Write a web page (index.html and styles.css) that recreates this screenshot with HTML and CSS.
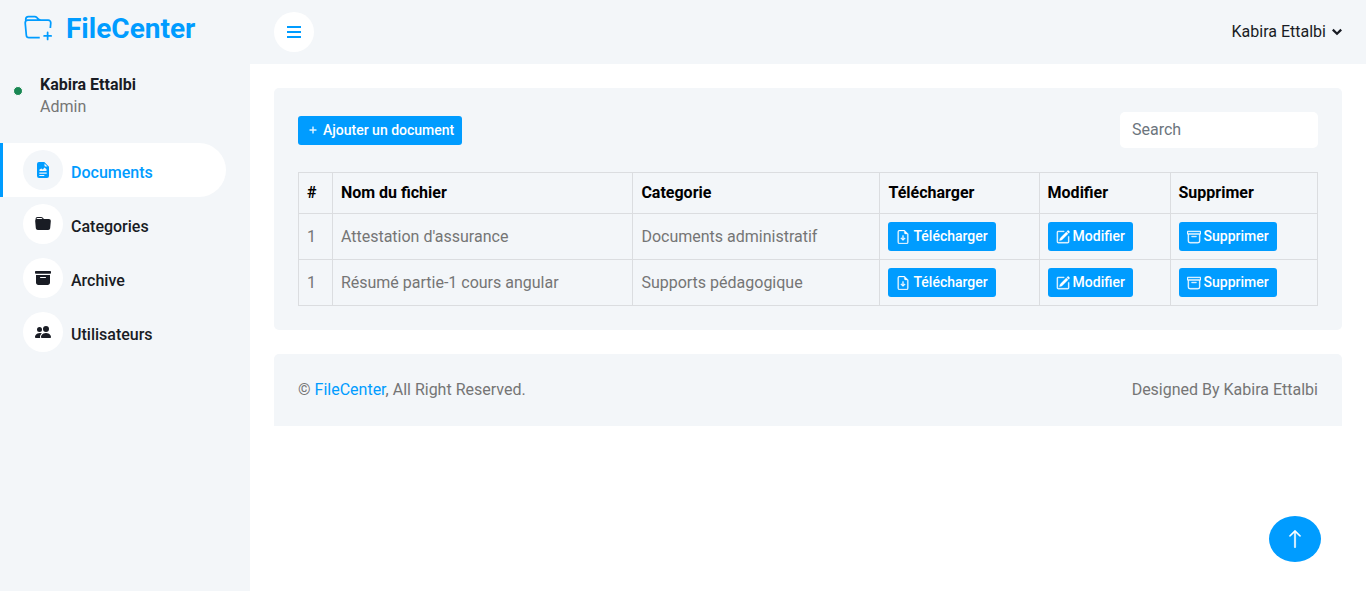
FILE: index.html
```html
<!DOCTYPE html>
<html lang="fr">
<head>
<meta charset="utf-8">
<meta name="viewport" content="width=device-width, initial-scale=1">
<title>FileCenter</title>
<link rel="stylesheet" href="styles.css">
</head>
<body>
<svg class="sprite" aria-hidden="true">
  <symbol id="i-plus" viewBox="0 0 16 16"><path d="M8 4a.5.5 0 0 1 .5.5v3h3a.5.5 0 0 1 0 1h-3v3a.5.5 0 0 1-1 0v-3h-3a.5.5 0 0 1 0-1h3v-3A.5.5 0 0 1 8 4z"/></symbol>
  <symbol id="i-download" viewBox="0 0 16 16"><path d="M8.5 6.5a.5.5 0 0 0-1 0v3.793L6.354 9.146a.5.5 0 1 0-.708.708l2 2a.5.5 0 0 0 .708 0l2-2a.5.5 0 0 0-.708-.708L8.5 10.293V6.5z"/><path d="M14 14V4.5L9.500 0H4a2 2 0 0 0-2 2v12a2 2 0 0 0 2 2h8a2 2 0 0 0 2-2zM9.500 3A1.500 1.500 0 0 0 11 4.500h2V14a1 1 0 0 1-1 1H4a1 1 0 0 1-1-1V2a1 1 0 0 1 1-1h5.500v2z"/></symbol>
  <symbol id="i-edit" viewBox="0 0 16 16"><path d="M15.502 1.940a.5.5 0 0 1 0 .706L14.459 3.690l-2-2L13.502.646a.5.5 0 0 1 .707 0l1.293 1.293zm-1.750 2.456-2-2L4.939 9.210a.5.5 0 0 0-.121.196l-.805 2.414a.25.25 0 0 0 .316.316l2.414-.805a.5.5 0 0 0 .196-.120l6.813-6.814z"/><path fill-rule="evenodd" d="M1 13.500A1.500 1.500 0 0 0 2.500 15h11a1.500 1.500 0 0 0 1.500-1.500v-6a.5.5 0 0 0-1 0v6a.5.5 0 0 1-.5.5h-11a.5.5 0 0 1-.5-.5v-11a.5.5 0 0 1 .5-.5H9a.5.5 0 0 0 0-1H2.500A1.500 1.500 0 0 0 1 2.500v11z"/></symbol>
  <symbol id="i-archive" viewBox="0 0 16 16"><path d="M0 2a1 1 0 0 1 1-1h14a1 1 0 0 1 1 1v2a1 1 0 0 1-1 1v7.500a2.500 2.500 0 0 1-2.500 2.500h-9A2.500 2.500 0 0 1 1 12.500V5a1 1 0 0 1-1-1V2zm2 3v7.500A1.500 1.500 0 0 0 3.500 14h9a1.500 1.500 0 0 0 1.500-1.500V5H2zm13-3H1v2h14V2zM5 7.500a.5.5 0 0 1 .5-.5h5a.5.5 0 0 1 0 1h-5a.5.5 0 0 1-.5-.5z"/></symbol>
</svg>
<div class="layout">
  <aside class="sidebar">
    <a class="brand" href="#">
      <svg class="brand-icon" viewBox="0 0 16 16" fill="currentColor" aria-hidden="true"><path d="m.5 3 .04.870a1.990 1.990 0 0 0-.342 1.311l.637 7A2 2 0 0 0 2.826 14H9v-1H2.826a1 1 0 0 1-.995-.910l-.637-7A1 1 0 0 1 2.190 4h11.620a1 1 0 0 1 .996 1.090L14.540 8h1.005l.256-2.819A2 2 0 0 0 13.810 3H9.828a2 2 0 0 1-1.414-.586l-.828-.828A2 2 0 0 0 6.172 1H2.500a2 2 0 0 0-2 2zm5.672-1a1 1 0 0 1 .707.293L7.586 3H2.190c-.240 0-.470.042-.683.120L1.500 2.980a1 1 0 0 1 1-.980h3.672z"/><path d="M13.500 10a.5.5 0 0 1 .5.5V12h1.500a.5.5 0 1 1 0 1H14v1.500a.5.5 0 1 1-1 0V13h-1.500a.5.5 0 0 1 0-1H13v-1.500a.5.5 0 0 1 .5-.5z"/></svg>
      <span>FileCenter</span>
    </a>
    <div class="user">
      <span class="status"></span>
      <div>
        <h6 class="user-name">Kabira Ettalbi</h6>
        <span class="user-role">Admin</span>
      </div>
    </div>
    <nav class="menu">
      <a class="menu-item active" href="#"><span class="menu-icon"><svg viewBox="0 0 16 16" fill="currentColor" aria-hidden="true"><path fill-rule="evenodd" d="M9.300 0H4a2 2 0 0 0-2 2v12a2 2 0 0 0 2 2h8a2 2 0 0 0 2-2V4.700L9.300 0zM9.500 1.500v2a1 1 0 0 0 1 1h2l-3-3zM4.500 9V7.500l1.800-1 1.500.9L9.500 5.500l2 1.800V9zM4.300 10.600h7.400v1.100H4.300zM4.300 12.900h5v1.100h-5z"/></svg></span>Documents</a>
      <a class="menu-item" href="#"><span class="menu-icon"><svg viewBox="0 0 16 16" fill="currentColor" aria-hidden="true"><path d="M9.828 3h3.982a2 2 0 0 1 1.992 2.181l-.637 7A2 2 0 0 1 13.174 14H2.825a2 2 0 0 1-1.991-1.819l-.637-7a1.990 1.990 0 0 1 .342-1.310L.5 3a2 2 0 0 1 2-2h3.672a2 2 0 0 1 1.414.586l.828.828A2 2 0 0 0 9.828 3zm-8.322.120C1.720 3.042 1.950 3 2.190 3h5.396l-.707-.707A1 1 0 0 0 6.172 2H2.500a1 1 0 0 0-1 .981l.006.139z"/></svg></span>Categories</a>
      <a class="menu-item" href="#"><span class="menu-icon"><svg viewBox="0 0 16 16" fill="currentColor" aria-hidden="true"><path d="M12.643 15C13.979 15 15 13.845 15 12.500V5H1v7.500C1 13.845 2.021 15 3.357 15h9.286zM5.500 7h5a.5.5 0 0 1 0 1h-5a.5.5 0 0 1 0-1zM.8 1a.8.8 0 0 0-.8.8V3a.8.8 0 0 0 .8.8h14.400A.8.8 0 0 0 16 3V1.800a.8.8 0 0 0-.8-.8H.8z"/></svg></span>Archive</a>
      <a class="menu-item" href="#"><span class="menu-icon"><svg viewBox="0 0 16 16" fill="currentColor" aria-hidden="true"><path d="M7 14s-1 0-1-1 1-4 5-4 5 3 5 4-1 1-1 1H7zm4-6a3 3 0 1 0 0-6 3 3 0 0 0 0 6z"/><path d="M5.216 14A2.238 2.238 0 0 1 5 13c0-1.355.680-2.750 1.936-3.720A6.325 6.325 0 0 0 5 9c-4 0-5 3-5 4s1 1 1 1h4.216z"/><path d="M4.500 8a2.500 2.500 0 1 0 0-5 2.500 2.500 0 0 0 0 5z"/></svg></span>Utilisateurs</a>
    </nav>
  </aside>
  <div class="content">
    <header class="topbar">
      <button class="toggle" type="button" aria-label="Menu"><svg viewBox="0 0 14 16" fill="currentColor" aria-hidden="true"><path d="M0 2h14v2H0zM0 7h14v2H0zM0 12h14v2H0z"/></svg></button>
      <a class="account" href="#">Kabira Ettalbi<svg viewBox="0 0 10 10" fill="none" stroke="currentColor" stroke-width="2.200" aria-hidden="true"><path d="m.8 2.600 4.200 4.200 4.200-4.200"/></svg></a>
    </header>
    <main>
      <section class="card">
        <div class="tools">
          <button class="btn" type="button"><svg aria-hidden="true"><use href="#i-plus"/></svg> Ajouter un document</button>
          <input class="search" type="search" placeholder="Search" aria-label="Search">
        </div>
        <table class="files">
          <thead>
            <tr><th scope="col">#</th><th scope="col">Nom du fichier</th><th scope="col">Categorie</th><th scope="col">Télécharger</th><th scope="col">Modifier</th><th scope="col">Supprimer</th></tr>
          </thead>
          <tbody>
            <tr>
              <td>1</td><td>Attestation d'assurance</td><td>Documents administratif</td>
              <td><button class="btn" type="button"><svg aria-hidden="true"><use href="#i-download"/></svg>Télécharger</button></td>
              <td><button class="btn" type="button"><svg aria-hidden="true"><use href="#i-edit"/></svg>Modifier</button></td>
              <td><button class="btn" type="button"><svg aria-hidden="true"><use href="#i-archive"/></svg>Supprimer</button></td>
            </tr>
            <tr>
              <td>1</td><td>Résumé partie-1 cours angular</td><td>Supports pédagogique</td>
              <td><button class="btn" type="button"><svg aria-hidden="true"><use href="#i-download"/></svg>Télécharger</button></td>
              <td><button class="btn" type="button"><svg aria-hidden="true"><use href="#i-edit"/></svg>Modifier</button></td>
              <td><button class="btn" type="button"><svg aria-hidden="true"><use href="#i-archive"/></svg>Supprimer</button></td>
            </tr>
          </tbody>
        </table>
      </section>
    </main>
    <footer class="card footer">
      <div>© <a href="#">FileCenter</a>, All Right Reserved.</div>
      <div>Designed By Kabira Ettalbi</div>
    </footer>
  </div>
</div>
<a class="to-top" href="#" aria-label="Haut de page"><svg viewBox="0 0 16 16" fill="currentColor" stroke="currentColor" stroke-width=".4" aria-hidden="true"><path fill-rule="evenodd" d="M8 15a.5.5 0 0 0 .5-.5V2.707l3.146 3.147a.5.5 0 0 0 .708-.708l-4-4a.5.5 0 0 0-.708 0l-4 4a.5.5 0 1 0 .708.708L7.500 2.707V14.500a.5.5 0 0 0 .5.5z"/></svg></a>
</body>
</html>
```
FILE: styles.css
```css
:root {
  --primary: #009cff;
  --light: #f3f6f9;
  --dark: #191c24;
  --text: #757575;
  --line: #dbdde0;
}

*,
*::before,
*::after {
  box-sizing: border-box;
}

body {
  margin: 0;
  background: #fff;
  color: var(--text);
  font: 400 16px/24px Roboto, "Liberation Sans", sans-serif;
}

a {
  color: var(--primary);
  text-decoration: none;
}

button,
input {
  font: inherit;
}

.sprite {
  position: absolute;
  width: 0;
  height: 0;
}

.layout {
  display: flex;
  min-height: 100vh;
}

.sidebar {
  flex: 0 0 250px;
  padding-right: 24px;
  background: var(--light);
}

.brand {
  display: flex;
  align-items: flex-start;
  gap: 14px;
  padding: 12px 24px 0;
  font-size: 28px;
  font-weight: 700;
  line-height: 34px;
}

.brand-icon {
  width: 28px;
  height: 28px;
  margin-top: 2px;
}

.user {
  display: flex;
  align-items: flex-start;
  gap: 17px;
  padding: 29px 0 24px 13px;
}

.status {
  width: 10px;
  height: 10px;
  margin-top: 11px;
  border: 1px solid #fff;
  border-radius: 50%;
  background: #198754;
}

.user-name {
  margin: 0;
  color: var(--dark);
  font-size: 16px;
  font-weight: 700;
  line-height: 20px;
}

.user-role {
  display: block;
}

.menu-item {
  display: block;
  padding: 7px 20px;
  border-left: 3px solid var(--light);
  border-radius: 0 30px 30px 0;
  color: var(--dark);
  font-weight: 500;
  line-height: 24px;
}

.menu-icon {
  display: inline-flex;
  align-items: center;
  justify-content: center;
  width: 40px;
  height: 40px;
  margin-right: 8px;
  border-radius: 40px;
  background: #fff;
}

.menu-icon svg {
  width: 16px;
  height: 16px;
}

.menu-item.active {
  border-color: var(--primary);
  background: #fff;
  color: var(--primary);
}

.active .menu-icon {
  background: var(--light);
}

.content {
  flex: 1;
  min-width: 0;
}

.topbar {
  display: flex;
  align-items: center;
  justify-content: space-between;
  padding: 12px 24px;
  background: var(--light);
}

.toggle {
  display: flex;
  align-items: center;
  justify-content: center;
  width: 40px;
  height: 40px;
  padding: 0;
  border: 0;
  border-radius: 50%;
  background: #fff;
  color: var(--primary);
}

.toggle svg {
  width: 14px;
  height: 16px;
}

.account {
  display: flex;
  align-items: center;
  gap: 6px;
  color: var(--dark);
}

.account svg {
  width: 10px;
  height: 10px;
}

.card {
  margin: 24px 24px 0;
  padding: 24px;
  border-radius: 5px;
  background: var(--light);
}

.tools {
  display: flex;
  align-items: center;
  justify-content: space-between;
  gap: 24px;
  margin-bottom: 24px;
}

.btn {
  display: inline-flex;
  align-items: center;
  gap: 3px;
  padding: 4px 8px;
  border: 0;
  border-radius: 3px;
  background: var(--primary);
  color: #fff;
  font-size: 14px;
  font-weight: 500;
  line-height: 21px;
  vertical-align: top;
}

.btn svg {
  width: 14px;
  height: 14px;
  fill: currentColor;
  stroke: currentColor;
  stroke-width: 0.4;
}

.search {
  width: 198px;
  padding: 6px 12px;
  border: 0;
  border-radius: 5px;
  background: #fff;
  color: var(--text);
  line-height: 24px;
}

.search::placeholder {
  color: #6c757d;
  opacity: 1;
}

.files {
  width: 100%;
  border-collapse: collapse;
}

.files th,
.files td {
  padding: 8px;
  border: 1px solid var(--line);
  text-align: left;
}

.files th {
  color: #000;
  font-weight: 700;
}

.footer {
  display: flex;
  justify-content: space-between;
  border-radius: 5px 5px 0 0;
}

.to-top {
  position: fixed;
  right: 45px;
  bottom: 29px;
  display: flex;
  align-items: center;
  justify-content: center;
  width: 52px;
  height: 46px;
  border-radius: 50%;
  background: var(--primary);
  color: #fff;
}

.to-top svg {
  width: 20px;
  height: 20px;
}
```
